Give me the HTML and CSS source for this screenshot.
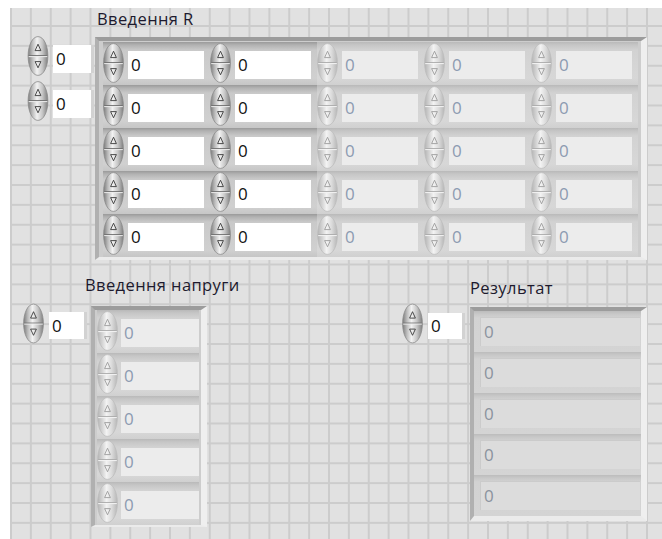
FILE: index.html
```html
<!DOCTYPE html>
<html lang="uk">
<head>
<meta charset="utf-8">
<title>Front panel</title>
<link rel="stylesheet" href="styles.css">
</head>
<body>
<svg class="sprite" xmlns="http://www.w3.org/2000/svg">
  <defs>
    <linearGradient id="spin-on-fill" x1="0" y1="0" x2="1" y2="0">
      <stop offset="0" stop-color="#7c7c7c"/>
      <stop offset="0.22" stop-color="#bdbdbd"/>
      <stop offset="0.45" stop-color="#f2f2f2"/>
      <stop offset="0.72" stop-color="#c6c6c6"/>
      <stop offset="1" stop-color="#7e7e7e"/>
    </linearGradient>
    <linearGradient id="spin-off-fill" x1="0" y1="0" x2="1" y2="0">
      <stop offset="0" stop-color="#b4b4b4"/>
      <stop offset="0.25" stop-color="#d6d6d6"/>
      <stop offset="0.45" stop-color="#f3f3f3"/>
      <stop offset="0.72" stop-color="#dadada"/>
      <stop offset="1" stop-color="#b6b6b6"/>
    </linearGradient>
    <symbol id="spin-on" viewBox="0 0 21 40">
      <path d="M10.5 0.6C16.2 0.6 20.4 9.5 20.4 20S16.2 39.4 10.5 39.4 0.6 30.5 0.6 20 4.8 0.6 10.5 0.6Z" fill="url(#spin-on-fill)" stroke="#8c8c8c" stroke-width="0.8"/>
      <path d="M1.2 19.6H19.8" stroke="#707070" stroke-width="1"/>
      <path d="M1.2 20.6H19.8" stroke="#ececec" stroke-width="1"/>
      <path d="M10.5 8.2 7.6 14.6H13.4Z" fill="none" stroke="#3a3a3a" stroke-width="0.9" stroke-linejoin="round"/>
      <path d="M7.6 25.6H13.4L10.5 31.8Z" fill="none" stroke="#3a3a3a" stroke-width="0.9" stroke-linejoin="round"/>
    </symbol>
    <symbol id="spin-off" viewBox="0 0 21 40">
      <path d="M10.5 0.6C16.2 0.6 20.4 9.5 20.4 20S16.2 39.4 10.5 39.4 0.6 30.5 0.6 20 4.8 0.6 10.5 0.6Z" fill="url(#spin-off-fill)" stroke="#bdbdbd" stroke-width="0.8"/>
      <path d="M1.2 19.6H19.8" stroke="#acacac" stroke-width="1"/>
      <path d="M1.2 20.6H19.8" stroke="#f4f4f4" stroke-width="1"/>
      <path d="M10.5 8.2 7.6 14.6H13.4Z" fill="none" stroke="#9d9d9d" stroke-width="0.9" stroke-linejoin="round"/>
      <path d="M7.6 25.6H13.4L10.5 31.8Z" fill="none" stroke="#9d9d9d" stroke-width="0.9" stroke-linejoin="round"/>
    </symbol>
  </defs>
</svg>

<main class="panel">
  <!-- resistance matrix -->
  <section class="group group-r">
    <div class="label">Введення R</div>
    <div class="group-body">
      <div class="index-col">
        <div class="index">
          <svg class="spin"><use href="#spin-on"/></svg>
          <div class="field">0</div>
        </div>
        <div class="index">
          <svg class="spin"><use href="#spin-on"/></svg>
          <div class="field">0</div>
        </div>
      </div>
      <div class="array array-r">
        <div class="cell"><svg class="spin"><use href="#spin-on"/></svg><div class="field">0</div></div>
        <div class="cell"><svg class="spin"><use href="#spin-on"/></svg><div class="field">0</div></div>
        <div class="cell off"><svg class="spin"><use href="#spin-off"/></svg><div class="field">0</div></div>
        <div class="cell off"><svg class="spin"><use href="#spin-off"/></svg><div class="field">0</div></div>
        <div class="cell off"><svg class="spin"><use href="#spin-off"/></svg><div class="field">0</div></div>

        <div class="cell"><svg class="spin"><use href="#spin-on"/></svg><div class="field">0</div></div>
        <div class="cell"><svg class="spin"><use href="#spin-on"/></svg><div class="field">0</div></div>
        <div class="cell off"><svg class="spin"><use href="#spin-off"/></svg><div class="field">0</div></div>
        <div class="cell off"><svg class="spin"><use href="#spin-off"/></svg><div class="field">0</div></div>
        <div class="cell off"><svg class="spin"><use href="#spin-off"/></svg><div class="field">0</div></div>

        <div class="cell"><svg class="spin"><use href="#spin-on"/></svg><div class="field">0</div></div>
        <div class="cell"><svg class="spin"><use href="#spin-on"/></svg><div class="field">0</div></div>
        <div class="cell off"><svg class="spin"><use href="#spin-off"/></svg><div class="field">0</div></div>
        <div class="cell off"><svg class="spin"><use href="#spin-off"/></svg><div class="field">0</div></div>
        <div class="cell off"><svg class="spin"><use href="#spin-off"/></svg><div class="field">0</div></div>

        <div class="cell"><svg class="spin"><use href="#spin-on"/></svg><div class="field">0</div></div>
        <div class="cell"><svg class="spin"><use href="#spin-on"/></svg><div class="field">0</div></div>
        <div class="cell off"><svg class="spin"><use href="#spin-off"/></svg><div class="field">0</div></div>
        <div class="cell off"><svg class="spin"><use href="#spin-off"/></svg><div class="field">0</div></div>
        <div class="cell off"><svg class="spin"><use href="#spin-off"/></svg><div class="field">0</div></div>

        <div class="cell"><svg class="spin"><use href="#spin-on"/></svg><div class="field">0</div></div>
        <div class="cell"><svg class="spin"><use href="#spin-on"/></svg><div class="field">0</div></div>
        <div class="cell off"><svg class="spin"><use href="#spin-off"/></svg><div class="field">0</div></div>
        <div class="cell off"><svg class="spin"><use href="#spin-off"/></svg><div class="field">0</div></div>
        <div class="cell off"><svg class="spin"><use href="#spin-off"/></svg><div class="field">0</div></div>
      </div>
    </div>
  </section>

  <div class="lower">
    <!-- voltage input -->
    <section class="group group-u">
      <div class="label">Введення напруги</div>
      <div class="group-body">
        <div class="index index-sm">
          <svg class="spin"><use href="#spin-on"/></svg>
          <div class="field">0</div>
        </div>
        <div class="array array-u">
          <div class="cell off"><svg class="spin"><use href="#spin-off"/></svg><div class="field">0</div></div>
          <div class="cell off"><svg class="spin"><use href="#spin-off"/></svg><div class="field">0</div></div>
          <div class="cell off"><svg class="spin"><use href="#spin-off"/></svg><div class="field">0</div></div>
          <div class="cell off"><svg class="spin"><use href="#spin-off"/></svg><div class="field">0</div></div>
          <div class="cell off"><svg class="spin"><use href="#spin-off"/></svg><div class="field">0</div></div>
        </div>
      </div>
    </section>

    <!-- result indicator -->
    <section class="group group-res">
      <div class="label">Результат</div>
      <div class="group-body">
        <div class="index index-sm">
          <svg class="spin"><use href="#spin-on"/></svg>
          <div class="field">0</div>
        </div>
        <div class="array array-res">
          <div class="row"><div class="readout">0</div></div>
          <div class="row"><div class="readout">0</div></div>
          <div class="row"><div class="readout">0</div></div>
          <div class="row"><div class="readout">0</div></div>
          <div class="row"><div class="readout">0</div></div>
        </div>
      </div>
    </section>
  </div>
</main>
</body>
</html>
```

FILE: styles.css
```css
html, body {
  margin: 0;
  background: #ffffff;
}

body {
  font-family: "Open Sans", "Noto Sans", sans-serif;
}

.sprite {
  display: block;
  width: 0;
  height: 0;
  overflow: hidden;
}

/* grid-lined front panel */
.panel {
  display: block;
  margin: 8px 0 0 10px;
  padding-top: 1px;
  height: 530px;
  overflow: hidden;
  background-color: #e1e1e1;
  background-image:
    linear-gradient(90deg, #cccccc 2px, transparent 2px),
    linear-gradient(180deg, #cccccc 2px, transparent 2px);
  background-size: 19.875px 19.875px;
  background-position: 0 17px;
}

.label {
  height: 20px;
  font-size: 16.5px;
  letter-spacing: 0.4px;
  line-height: 20px;
  color: #1d1a2e;
  white-space: nowrap;
}

.group-body {
  display: flex;
  align-items: flex-start;
}

.spin {
  display: block;
  flex: none;
  width: 21px;
  height: 40px;
}

.field {
  box-sizing: border-box;
  flex: none;
  height: 28px;
  padding-left: 3px;
  background: #ffffff;
  font-size: 17px;
  line-height: 28px;
  color: #111111;
}

/* index displays */
.index {
  display: flex;
  align-items: center;
  height: 40px;
}

.index .spin {
  width: 22px;
}

.index .field {
  width: 38px;
  margin: 6px 0 0 4px;
  box-shadow: 3px 0 0 #d2d2d2;
}

/* array frames */
.array {
  border-style: solid;
  border-color: #9c9c9c #efefef #ebebeb #b0b0b0;
  background: #cdcdcd;
}

.cell {
  display: flex;
  align-items: flex-start;
  padding-top: 1px;
  background: linear-gradient(#9a9a9a 0, #b2b2b2 3px, #c9c9c9 8px, #d0d0d0 36px, #c6c6c6 43px);
}

.cell .field {
  width: 76px;
  margin: 8px 0 0 4px;
}

.cell.off {
  background: linear-gradient(#b9b9b9 0, #c6c6c6 3px, #d2d2d2 8px, #d7d7d7 36px, #d0d0d0 43px);
}

.cell.off .field {
  background: #ececec;
  color: #8c9bb1;
}

/* resistance matrix */
.group-r .label {
  margin-left: 87px;
}

.group-r .group-body {
  margin-top: 8px;
}

.index-col {
  display: flex;
  flex-direction: column;
  gap: 5px;
  margin: -1px 4px 0 17px;
}

.array-r {
  display: grid;
  grid-template-columns: repeat(5, 107px);
  grid-auto-rows: 43px;
  border-width: 4px 6px 3px 4px;
  padding: 1px 3px 0 4px;
}

/* lower row */
.lower {
  display: flex;
  align-items: flex-start;
  margin-top: 15px;
}

.group {
  flex: none;
}

.index-sm {
  height: 43px;
}

.index-sm .spin {
  width: 21px;
  height: 43px;
}

.index-sm .field {
  width: 35px;
  height: 27px;
  line-height: 27px;
  margin: 4px 0 0 5px;
}

.group-u {
  width: 184px;
  margin-left: 13px;
}

.group-u .label {
  margin-left: 62px;
}

.group-u .group-body {
  margin-top: 7px;
}

.array-u {
  display: grid;
  grid-template-columns: 102px;
  grid-auto-rows: 43px;
  margin: 4px 0 0 7px;
  border-width: 4px 6px 2px 4px;
  padding: 0 2px;
}

.array-u .cell .field {
  width: 78px;
  margin-left: 3px;
}

.group-res {
  margin-left: 195px;
}

.group-res .label {
  margin-left: 68px;
  padding-top: 3px;
}

.group-res .group-body {
  margin-top: 4px;
}

.group-res .index-sm .field {
  width: 34px;
  height: 26px;
  line-height: 26px;
}

.array-res {
  display: grid;
  grid-auto-rows: 41px;
  margin: 5px 0 0 8px;
  border-width: 4px 6px 5px 4px;
  background: #d2d2d2;
}

.row {
  padding: 6px 1px 0 6px;
  background: linear-gradient(#bcbcbc 0, #c8c8c8 3px, #d2d2d2 7px, #d4d4d4 100%);
}

.readout {
  box-sizing: border-box;
  width: 160px;
  height: 29px;
  padding-left: 4px;
  background: #dcdcdc;
  box-shadow: inset 1px 1px 0 #cbcbcb;
  font-size: 17px;
  line-height: 29px;
  color: #8b939e;
}
```
